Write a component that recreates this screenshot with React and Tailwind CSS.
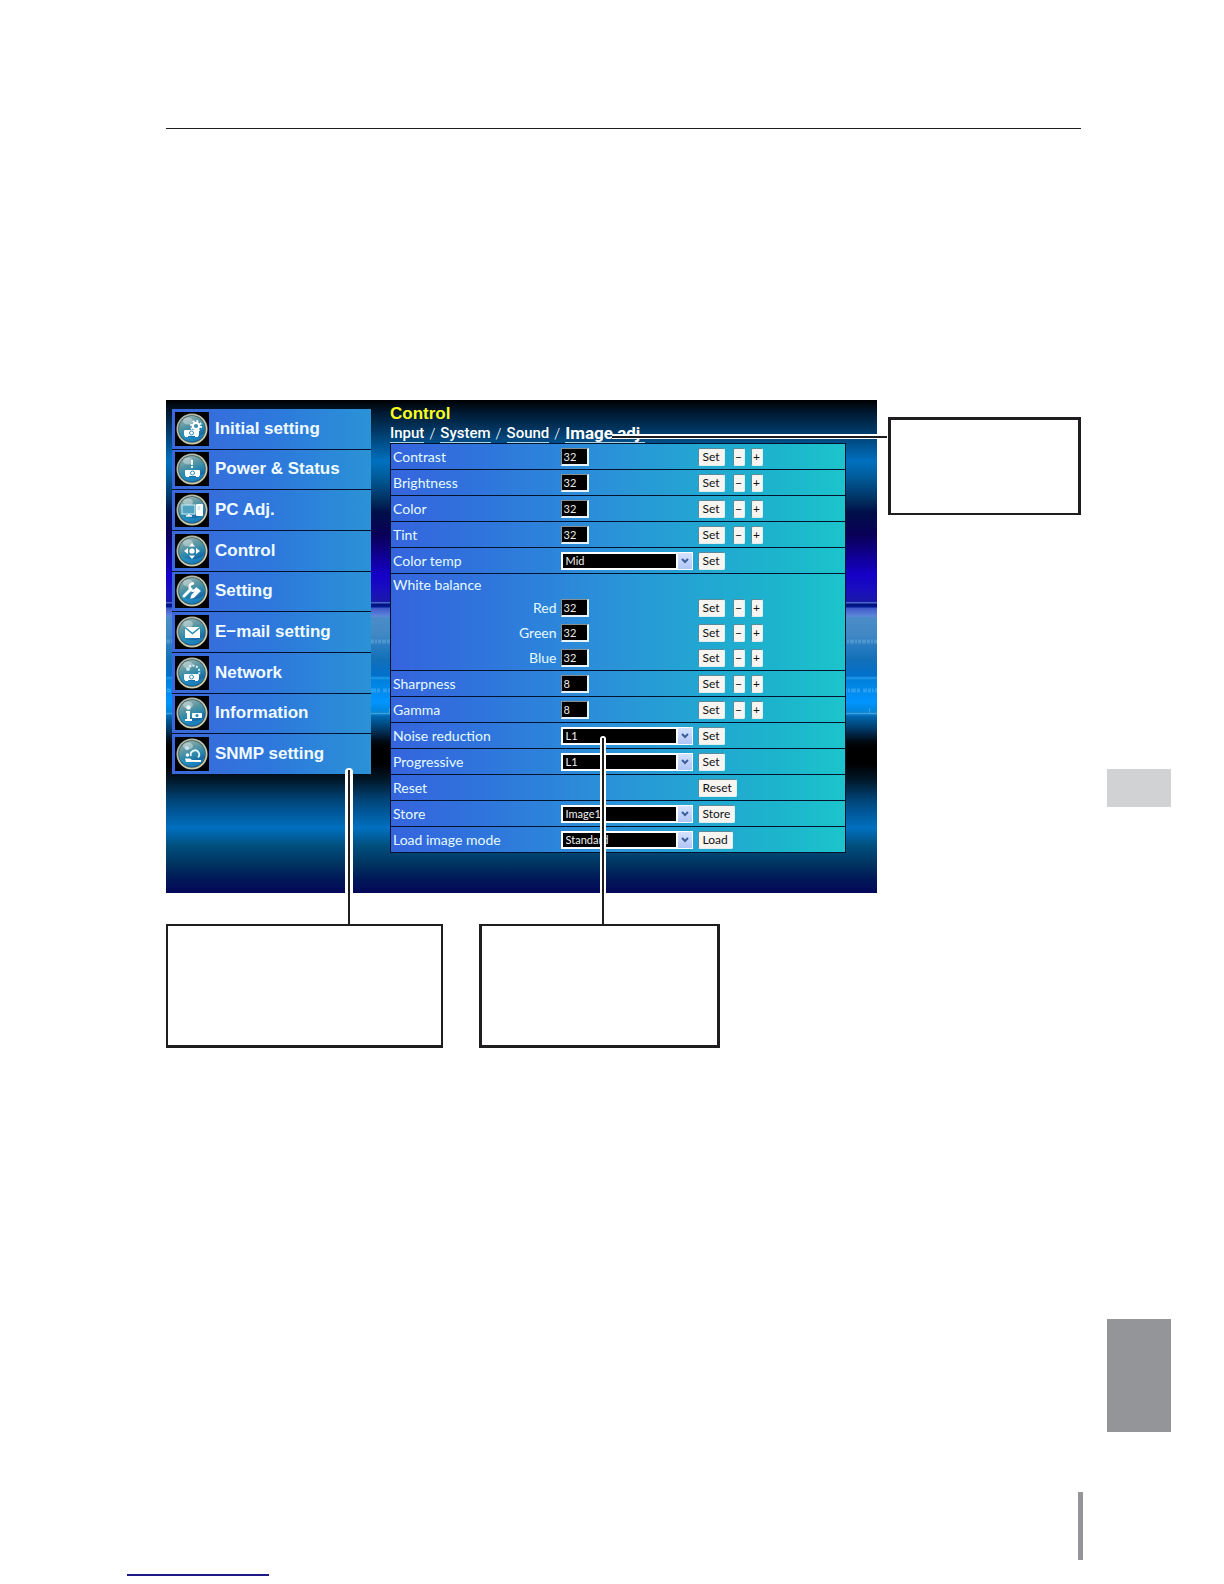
import React from "react";

const PANEL_BG =
  "bg-[linear-gradient(180deg,#000_0px,#001830_12px,#003a68_32px,#0070bf_61px,#005a98_78px,#003060_100px,#000f48_112px,#0a0058_135px,#0f0090_155px,#1500c8_175px,#1a10bc_192px,#1a18a8_202px,#4a68c8_202px,#4a68c8_203px,#00107f_204px,#001a90_207px,#3f58c8_208px,#5a80d8_215px,#6088d8_216px,#4a8cc8_218px,#4088c4_235px,#2a7cc0_245px,#1270b8_260px,#0070cc_276px,#209ae8_278px,#0080dc_280px,#0095ff_302px,#0088e0_310px,#1888d0_314px,#0068b0_316px,#003560_330px,#000a14_341px,#000_348px,#000_364px,#00182a_380px,#004478_400px,#0070c0_428px,#00507f_445px,#003460_464px,#001a58_478px,#04085a_493px)]";

const Projector = ({ x, y }) => (
  <g transform={`translate(${x} ${y})`}>
    <rect x="0" y="0" width="15" height="6" rx="1" fill="#fff" />
    <rect x="1" y="6" width="3" height="1" fill="#fff" />
    <rect x="11" y="6" width="3" height="1" fill="#fff" />
    <circle cx="7.5" cy="3" r="2" fill="#fff" stroke="#2f8fb4" strokeWidth="1" />
  </g>
);

const GLYPHS = {
  initial: (
    <>
      <circle cx="21" cy="14" r="3.2" fill="none" stroke="#fff" strokeWidth="2.2" />
      <circle cx="21" cy="14" r="5" fill="none" stroke="#fff" strokeWidth="2" strokeDasharray="1.9 2" />
      <Projector x={9} y={18} />
    </>
  ),
  power: (
    <>
      <rect x="16" y="8" width="2" height="5" fill="#e8f8ff" />
      <rect x="16" y="14" width="2" height="2" fill="#e8f8ff" />
      <Projector x={10} y={18} />
    </>
  ),
  pc: (
    <>
      <rect x="7" y="12" width="13" height="9" fill="#4fa3c0" stroke="#d8f0f8" strokeWidth="1" />
      <path d="M11 23h6M14 21v2" stroke="#fff" strokeWidth="1.4" />
      <rect x="21" y="11" width="7" height="12" rx="1" fill="#fff" />
      <path d="M22.5 14h3M22.5 16h3" stroke="#8cc4d8" strokeWidth="0.8" />
    </>
  ),
  control: (
    <g fill="#fff">
      <circle cx="17" cy="17" r="2.6" />
      <path d="M17 9l3 3.5h-6zM17 25l3-3.5h-6zM9 17l4-3v6zM25 17l-4-3v6z" />
    </g>
  ),
  setting: (
    <g fill="none" stroke="#fff" strokeLinecap="round">
      <path d="M9 22l7-7" strokeWidth="3" />
      <path d="M18 9.500a3.600 3.600 0 1 0 3.500 5" strokeWidth="2.4" />
      <path d="M16 24l2.500-.6 6.500-6.400-2-2L17 21z" fill="#fff" strokeWidth="1.2" />
    </g>
  ),
  email: (
    <>
      <rect x="10" y="12" width="15" height="11" fill="#fff" />
      <path d="M10 12.5l7.5 6 7.5-6" fill="none" stroke="#1c8bb4" strokeWidth="1.4" />
    </>
  ),
  network: (
    <>
      <path d="M14 10.5c6-3 12 2 10 7.500" fill="none" stroke="#d8f4ff" strokeWidth="2" strokeDasharray="2 1.6" />
      <circle cx="13" cy="13" r="2" fill="#bfe4f0" />
      <Projector x={9} y={18} />
    </>
  ),
  information: (
    <>
      <circle cx="13.5" cy="11.5" r="2.3" fill="#e4f4f8" />
      <path d="M11 15h4v8h2v2h-7v-2h2v-6h-1z" fill="#fff" />
      <rect x="17" y="17" width="10" height="5" rx="1" fill="#fff" />
      <circle cx="22" cy="19.5" r="1.5" fill="#1c8bb4" />
    </>
  ),
  snmp: (
    <>
      <circle cx="12" cy="11" r="2" fill="#bfe4f0" />
      <circle cx="12.5" cy="18" r="1.8" fill="#fff" />
      <path d="M16 19a4.200 4.200 0 1 1 7 1.500" fill="none" stroke="#e4f8ff" strokeWidth="1.8" />
      <path d="M10 21.500h5l2 1.500h9v2h-15z" fill="#fff" />
    </>
  ),
};

const Orb = ({ kind }) => (
  <svg viewBox="0 0 34 34" className="h-[34px] w-[34px] shrink-0 bg-black" aria-hidden="true">
    <defs>
      <linearGradient id={`ring-${kind}`} x1="0" y1="0" x2="1" y2="1">
        <stop offset="0" stopColor="#a4aca0" />
        <stop offset="0.5" stopColor="#c4c6b0" />
        <stop offset="1" stopColor="#d8d2ac" />
      </linearGradient>
      <linearGradient id={`ball-${kind}`} x1="0.2" y1="0" x2="0.6" y2="1">
        <stop offset="0" stopColor="#9cb2b2" />
        <stop offset="0.35" stopColor="#5a96a2" />
        <stop offset="0.6" stopColor="#2a88ac" />
        <stop offset="1" stopColor="#0c50a0" />
      </linearGradient>
    </defs>
    <circle cx="17" cy="17" r="15.5" fill={`url(#ring-${kind})`} />
    <circle cx="17" cy="17" r="13.8" fill="#3c5c60" />
    <circle cx="17" cy="17" r="13" fill={`url(#ball-${kind})`} />
    <path d="M5 21c5 5 17 6 24.500 0a13 13 0 0 1-24.500 0z" fill="#25a4d4" opacity="0.5" />
    <ellipse cx="13" cy="9" rx="5" ry="3.5" fill="#eff6f0" opacity="0.4" />
    {GLYPHS[kind]}
  </svg>
);

const MENU = [
  ["initial", "Initial setting"],
  ["power", "Power & Status"],
  ["pc", "PC Adj."],
  ["control", "Control"],
  ["setting", "Setting"],
  ["email", "E−mail setting"],
  ["network", "Network"],
  ["information", "Information"],
  ["snmp", "SNMP setting"],
];

const Menu = () => (
  <nav className="mt-[9px] ml-1.5 grid min-h-[365px] w-[199px] shrink-0 auto-rows-fr gap-px self-start bg-[#06102a]">
    {MENU.map(([kind, label]) => (
      <a
        key={kind}
        href={`#${kind}`}
        className="flex items-center gap-1.5 bg-linear-to-r from-[#3a68dc] via-[#2d78dc] to-[#2b92d6] pl-[3px] text-[17px] leading-5 font-bold text-[#f0fbff]"
      >
        <Orb kind={kind} />
        {label}
      </a>
    ))}
  </nav>
);

const Btn = ({ children, label, narrow }) => (
  <button
    type="button"
    aria-label={label}
    className={`flex h-[18px] items-center justify-center rounded-xs border border-t-[#5d8a98] border-r-[#dfeff0] border-b-[#dfeff0] border-l-[#5d8a98] bg-[#f6f5f1] font-[Lato] text-[12px] leading-3 text-[#111] ${narrow ? "w-3" : "min-w-[23px] px-1"}`}
  >
    {children}
  </button>
);

const NumberBox = ({ id, value }) => (
  <input
    id={id}
    type="text"
    defaultValue={value}
    className="block h-[18px] w-7 border-t border-r-2 border-b-2 border-l border-t-[#8a8f90] border-r-[#e8f4f8] border-b-[#e8f4f8] border-l-[#8a8f90] bg-black pl-0.5 text-[11px] leading-3 text-[#e8e8e8]"
  />
);

const Drop = ({ id, value }) => (
  <div className="relative w-[132px]">
    <select
      id={id}
      defaultValue={value}
      className="block h-[18px] w-full appearance-none border-2 border-white bg-black pl-[3px] text-[11px] leading-3 text-[#f0f0f0]"
    >
      <option>{value}</option>
    </select>
    <div className="pointer-events-none absolute inset-y-px right-px flex w-4 items-center justify-center border-l-2 border-white bg-linear-to-b from-[#d5e2ff] to-[#b0c6f6]">
      <svg viewBox="0 0 8 6" className="h-1.5 w-2" aria-hidden="true">
        <path d="M1 1l3 3 3-3" fill="none" stroke="#3f5f9c" strokeWidth="2" />
      </svg>
    </div>
  </div>
);

const ROWS = [
  { label: "Contrast", num: "32" },
  { label: "Brightness", num: "32" },
  { label: "Color", num: "32" },
  { label: "Tint", num: "32" },
  { label: "Color temp", pick: "Mid", action: "Set" },
  { label: "White balance", group: true },
  { label: "Red", num: "32", sub: true },
  { label: "Green", num: "32", sub: true },
  { label: "Blue", num: "32", sub: true, last: true },
  { label: "Sharpness", num: "8" },
  { label: "Gamma", num: "8" },
  { label: "Noise reduction", pick: "L1", action: "Set" },
  { label: "Progressive", pick: "L1", action: "Set" },
  { label: "Reset", action: "Reset" },
  { label: "Store", pick: "Image1", action: "Store" },
  { label: "Load image mode", pick: "Standard", action: "Load" },
];

const Row = ({ row }) => {
  const id = row.label.toLowerCase().replace(/ /g, "-");
  const line = (row.sub && !row.last) || row.group ? "" : "border-b border-[#04122c]";
  const height = row.group ? "h-[22px]" : row.sub ? "h-[25px]" : "h-[26px]";
  const hasField = row.num || row.pick;
  return (
    <tr className={`${line} ${height}`}>
      <th
        scope="row"
        className={`p-0 align-middle text-[14px] leading-4 font-normal text-[#e4fbff] ${row.sub ? "pr-1 text-right" : "pl-0.5 text-left"}`}
      >
        {hasField ? <label htmlFor={id}>{row.label}</label> : row.label}
      </th>
      <td className="p-0 align-middle">
        {row.num && <NumberBox id={id} value={row.num} />}
        {row.pick && <Drop id={id} value={row.pick} />}
      </td>
      <td className="p-0 align-middle">
        {row.num && (
          <div className="flex items-center">
            <Btn>Set</Btn>
            <div className="ml-2 flex gap-1.5">
              <Btn narrow label={`Decrease ${row.label}`}>−</Btn>
              <Btn narrow label={`Increase ${row.label}`}>+</Btn>
            </div>
          </div>
        )}
        {row.action && (
          <div className="flex">
            <Btn>{row.action}</Btn>
          </div>
        )}
      </td>
    </tr>
  );
};

const Tabs = () => (
  <div className="flex h-[19px] items-end gap-[5px] font-[Roboto] text-[15px] leading-[18px] font-medium text-white">
    <a href="#input" className="border-b border-[#a8d4e8]">Input</a>
    <span className="font-light">/</span>
    <a href="#system" className="border-b border-[#a8d4e8]">System</a>
    <span className="font-light">/</span>
    <a href="#sound" className="border-b border-[#a8d4e8]">Sound</a>
    <span className="font-light">/</span>
    <a href="#image" className="border-b border-[#a8d4e8] text-[17px] font-bold">Image adj.</a>
  </div>
);

const Texture = () => (
  <svg className="absolute inset-x-0 top-[236px] h-20 w-full" aria-hidden="true">
    <defs>
      <pattern id="texture" width="24" height="80" patternUnits="userSpaceOnUse">
        <path
          d="M0 5.5h4M5 5.5h3M9 5.5h2M12 5.500h4M17 5.500h2M20 5.500h3M1 54.500h4M6 54.500h3M10 54.500h2M13 54.500h5M19 54.500h3"
          fill="none"
          stroke="#a8d8f8"
          strokeWidth="4"
          opacity="0.25"
        />
        <path d="M7.5 72v5M0 77.5h24" fill="none" stroke="#a8d8f8" strokeWidth="1" opacity="0.3" />
      </pattern>
    </defs>
    <rect width="100%" height="80" fill="url(#texture)" />
  </svg>
);

const Screen = () => (
  <section className={`relative flex min-h-[493px] min-w-0 flex-1 ${PANEL_BG}`}>
    <Texture />
    <div className="relative flex min-w-0 flex-1 items-start">
      <Menu />
      <div className="ml-[19px] min-w-0 flex-1 pt-1 pr-[31px]">
        <h1 className="text-[17px] leading-5 font-bold text-[#fbff20]">Control</h1>
        <Tabs />
        <table className="w-full table-fixed border-collapse border border-[#04122c] bg-[linear-gradient(90deg,#3564dd_0%,#2f74dc_20%,#2c84da_35%,#2a94d8_50%,#22a6d2_68%,#1cb4cc_85%,#1cc4cc_100%)] font-[Lato]">
          <colgroup>
            <col className="w-[170px]" />
            <col className="w-[137px]" />
            <col />
          </colgroup>
          <tbody>
            {ROWS.map((row) => (
              <Row key={row.label} row={row} />
            ))}
          </tbody>
        </table>
      </div>
    </div>
    <div className="absolute top-[34px] -right-[10px] left-[446px] flex h-[5px] items-center bg-white">
      <div className="h-0.5 w-full bg-[#1f1d20]" />
    </div>
    <div className="absolute top-[368px] -bottom-[31px] left-[179px] flex w-2 justify-center rounded-t-full bg-white">
      <div className="mt-0.5 w-0.5 bg-[#1f1d20]" />
    </div>
    <div className="absolute top-[336px] -bottom-[31px] left-[434px] flex w-[6px] justify-center rounded-t-full bg-white">
      <div className="mt-0.5 w-0.5 bg-[#1f1d20]" />
    </div>
  </section>
);

export default function App() {
  return (
    <div className="flex min-h-screen flex-col bg-white font-['Liberation_Sans',Arial,sans-serif]">
      <div className="flex items-start">
        <main className="ml-[166px] min-w-0 flex-1">
          <header className="h-[129px] border-b border-[#1f1d20]" />
          <div className="mt-[271px] flex items-start gap-[11px]">
            <Screen />
            <div className="mt-[17px] h-[98px] w-[193px] shrink-0 border-[3px] border-b-2 border-[#1f1d20]" />
          </div>
          <div className="mt-[31px] flex gap-9">
            <div className="h-[124px] w-[277px] border-2 border-b-[3px] border-[#1f1d20]" />
            <div className="h-[124px] w-[241px] border-[3px] border-t-2 border-[#1f1d20]" />
          </div>
        </main>
        <aside className="mr-[53px] ml-[26px] w-16 shrink-0 pt-[769px]">
          <div className="h-[38px] bg-[#d0d2d3]" />
          <div className="mt-[512px] h-[113px] bg-[#939598]" />
        </aside>
      </div>
      <footer className="mt-[60px] pb-2">
        <div className="mr-[141px] ml-auto h-[68px] w-[5px] bg-[#939598]" />
        <div className="mt-[14px] ml-[127px] h-0.5 w-[142px] bg-[#1c1a86]" />
      </footer>
    </div>
  );
}
